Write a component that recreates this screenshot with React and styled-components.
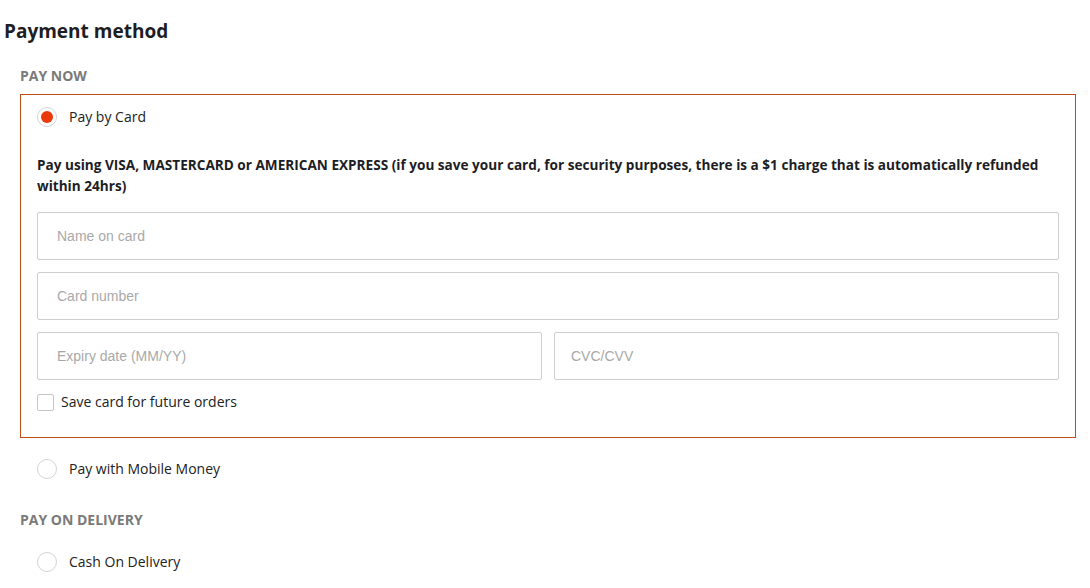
import React, { useState } from 'react';
import styled, { createGlobalStyle } from 'styled-components';

const GlobalStyle = createGlobalStyle`
  body {
    margin: 0;
    background: #fff;
    font-family: 'Open Sans', 'Noto Sans', sans-serif;
    color: #222;
  }
`;

const Page = styled.div`
  padding: 19px 14px 0 4px;
`;

const Title = styled.h2`
  margin: 0 0 23px 0;
  font-size: 19px;
  line-height: 24px;
  font-weight: 700;
  color: #1d1d24;
`;

const Section = styled.div`
  padding-left: 16px;
`;

const SectionLabel = styled.div`
  font-size: 14px;
  line-height: 19px;
  font-weight: 700;
  color: #7a7a7a;
  text-transform: uppercase;
  margin-bottom: 9px;
`;

const OptionBox = styled.div`
  border: 1px solid ${({ $active }) => ($active ? '#c24e17' : 'transparent')};
  padding: ${({ $active }) => ($active ? '12px 16px 25px' : '13px 16px 8px')};
  margin-bottom: ${({ $active }) => ($active ? '7px' : '0')};
`;

const RadioRow = styled.label`
  display: flex;
  align-items: center;
  gap: 12px;
  cursor: pointer;
  font-size: 14px;
  line-height: 20px;
  color: #222;
`;

const RadioCircle = styled.span`
  width: 18px;
  height: 18px;
  border-radius: 50%;
  border: 1px solid #d3d3d3;
  display: flex;
  align-items: center;
  justify-content: center;
  flex-shrink: 0;

  &::after {
    content: '';
    width: 12px;
    height: 12px;
    border-radius: 50%;
    background: ${({ $checked }) => ($checked ? '#ea3a0c' : 'transparent')};
  }
`;

const Description = styled.p`
  margin: 27px 0 16px 0;
  font-size: 13.6px;
  font-weight: 700;
  line-height: 21px;
  color: #1d1d24;
`;

const Fields = styled.div`
  display: grid;
  grid-template-columns: 1fr 1fr;
  gap: 12px;
`;

const Input = styled.input`
  grid-column: ${({ $full }) => ($full ? '1 / -1' : 'auto')};
  height: 48px;
  box-sizing: border-box;
  border: 1px solid #cfcfcf;
  border-radius: 2px;
  padding: 0 ${({ $pad }) => $pad || 19}px;
  font-family: 'Liberation Sans', Arial, sans-serif;
  font-size: 14px;
  color: #333;
  outline: none;

  &::placeholder {
    color: #a9a9a9;
  }
`;

const CheckRow = styled.label`
  display: flex;
  align-items: center;
  gap: 7px;
  margin-top: 12px;
  font-size: 14px;
  line-height: 20px;
  color: #222;
`;

const CheckBox = styled.span`
  width: 15px;
  height: 15px;
  border: 1px solid #c6c6c6;
  border-radius: 2px;
  flex-shrink: 0;
`;

const Spacer = styled.div`
  height: ${({ $h }) => $h}px;
`;

export default function App() {
  const [method, setMethod] = useState('card');

  return (
    <>
      <GlobalStyle />
      <Page>
        <Title>Payment method</Title>
        <Section>
          <SectionLabel>Pay now</SectionLabel>
          <OptionBox $active={method === 'card'}>
            <RadioRow onClick={() => setMethod('card')}>
              <RadioCircle $checked={method === 'card'} />
              Pay by Card
            </RadioRow>
            {method === 'card' && (
              <>
                <Description>
                  Pay using VISA, MASTERCARD or AMERICAN EXPRESS (if you save your card, for security
                  purposes, there is a $1 charge that is automatically refunded within 24hrs)
                </Description>
                <Fields>
                  <Input $full placeholder="Name on card" />
                  <Input $full placeholder="Card number" />
                  <Input placeholder="Expiry date (MM/YY)" />
                  <Input $pad={16} placeholder="CVC/CVV" />
                </Fields>
                <CheckRow>
                  <CheckBox />
                  Save card for future orders
                </CheckRow>
              </>
            )}
          </OptionBox>
          <OptionBox $active={method === 'momo'}>
            <RadioRow onClick={() => setMethod('momo')}>
              <RadioCircle $checked={method === 'momo'} />
              Pay with Mobile Money
            </RadioRow>
          </OptionBox>
          <Spacer $h={22} />
          <SectionLabel>Pay on delivery</SectionLabel>
          <OptionBox $active={method === 'cod'}>
            <RadioRow onClick={() => setMethod('cod')}>
              <RadioCircle $checked={method === 'cod'} />
              Cash On Delivery
            </RadioRow>
          </OptionBox>
        </Section>
      </Page>
    </>
  );
}
